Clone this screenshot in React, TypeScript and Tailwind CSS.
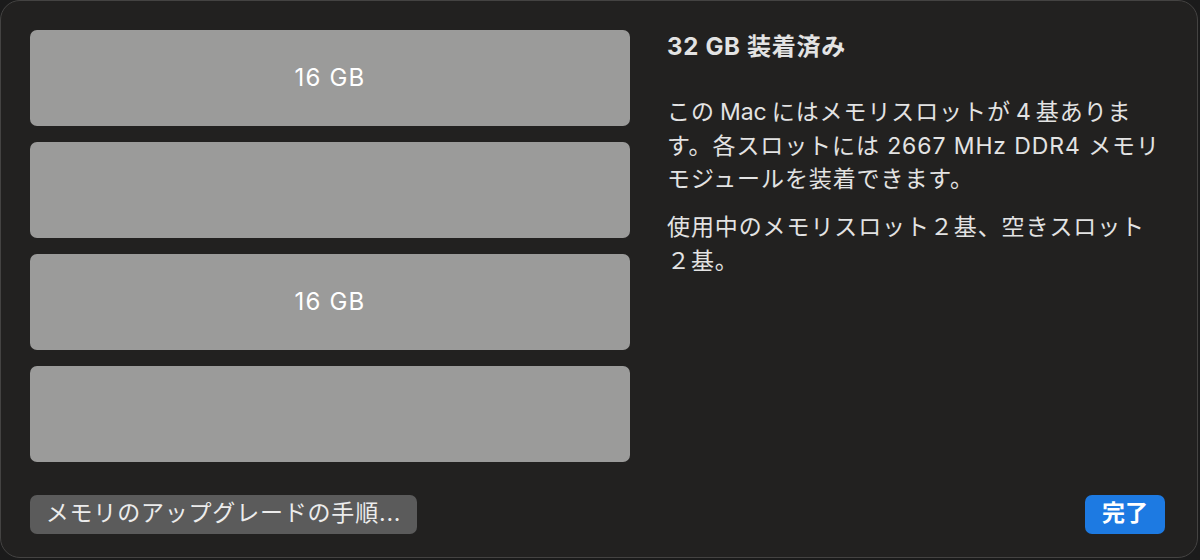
const slots = ["16 GB", "", "16 GB", ""];

const L = ({ children }: { children: React.ReactNode }) => (
  <span className="tracking-normal">{children}</span>
);

export default function App() {
  return (
    <div className="w-[1200px] h-[560px] bg-[#1b1b1b] font-['Inter','Noto_Sans_CJK_JP',sans-serif]">
      <div className="w-[1198px] h-[558px] rounded-[20px] border border-[#444342] bg-[#222120] pl-[29px] pr-[32px] pt-[29px] flex flex-col">
        <div className="flex gap-[37px]">
          {/* memory slots */}
          <div className="w-[600px] flex flex-col gap-4">
            {slots.map((s, i) => (
              <div
                key={i}
                className="h-[96px] rounded-[7px] bg-[#9b9b9a] flex items-center justify-center text-[24px] tracking-[1.2px] text-white pb-[1px]"
              >
                {s}
              </div>
            ))}
          </div>

          {/* description */}
          <div className="flex-1 text-[#e3e3e3] whitespace-nowrap">
            <h2 className="font-bold text-[24px] tracking-[0.7px] leading-[32px] mt-[1px]">32 GB 装着済み</h2>
            <div className="text-[23px] tracking-[0.9px]">
              <p className="leading-[33.5px] mt-[33px]">
                この{"\u2009"}<L>Mac</L>{"\u2009"}にはメモリスロットが{"\u2009"}<L>4</L>{"\u2009"}基ありま
                <br />
                す。各スロットには 2667 MHz DDR4 メモリ
                <br />
                モジュールを装着できます。
              </p>
              <p className="leading-[34px] mt-[13px]">
                使用中のメモリスロット２基、空きスロット
                <br />
                ２基。
              </p>
            </div>
          </div>
        </div>

        <div className="mt-[33px] flex items-center justify-between">
          <button className="h-[39px] w-[387px] rounded-[7px] bg-[#5b5b5b] text-[#ececec] text-[23px] tracking-[0.8px] leading-none pb-[2px]">
            メモリのアップグレードの手順...
          </button>
          <button className="h-[39px] w-[80px] rounded-[7px] bg-[#1d7ae2] text-white text-[23px] font-semibold leading-none pb-[2px]">
            完了
          </button>
        </div>
      </div>
    </div>
  );
}
